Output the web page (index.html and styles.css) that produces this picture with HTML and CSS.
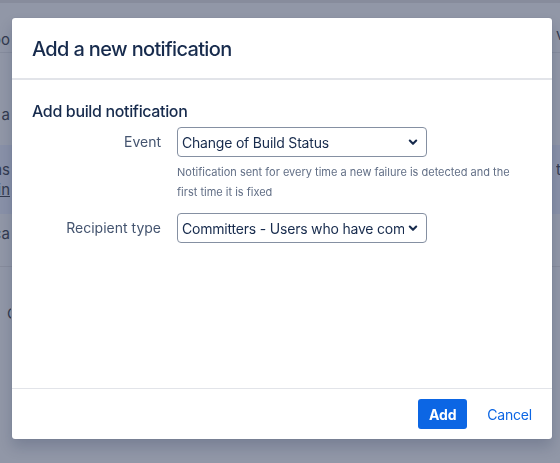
FILE: index.html
```html
<!DOCTYPE html>
<html>
<head>
<meta charset="utf-8">
<link rel="stylesheet" href="styles.css">
</head>
<body>
<div class="page">
  <div class="topstrip"></div>
  <div class="bg-header">
    <div class="bg-left">Repo</div>
    <div class="bg-right">v</div>
  </div>
  <div class="bg-row plain">
    <div class="bg-left">Go to a</div>
  </div>
  <div class="bg-row highlight">
    <div class="bg-left two"><span>Instructions</span><span class="u">Login</span></div>
    <div class="bg-right two"><span>t</span></div>
  </div>
  <div class="bg-row small">
    <div class="bg-left">Notifica</div>
  </div>
  <div class="bg-row last">
    <div class="bg-left">C</div>
  </div>
</div>

<div class="dialog">
  <div class="dialog-header">
    <h2 class="dialog-title">Add a new notification</h2>
  </div>
  <div class="dialog-body">
    <h3 class="section-title">Add build notification</h3>
    <div class="form-row">
      <label class="field-label">Event</label>
      <div class="field">
        <div class="select">
          <span class="select-text">Change of Build Status</span>
          <svg class="chev" width="10" height="7" viewBox="0 0 10 7"><path d="M1.8 1.6 L5 4.8 L8.2 1.6" fill="none" stroke="#172b4d" stroke-width="2.1" stroke-linecap="round" stroke-linejoin="round"/></svg>
        </div>
        <div class="help">Notification sent for every time a new failure is detected and the first time it is fixed</div>
      </div>
    </div>
    <div class="form-row second">
      <label class="field-label">Recipient type</label>
      <div class="field">
        <div class="select">
          <span class="select-text">Committers - Users who have committed to the build</span>
          <svg class="chev" width="10" height="7" viewBox="0 0 10 7"><path d="M1.8 1.6 L5 4.8 L8.2 1.6" fill="none" stroke="#172b4d" stroke-width="2.1" stroke-linecap="round" stroke-linejoin="round"/></svg>
        </div>
      </div>
    </div>
  </div>
  <div class="dialog-footer">
    <button class="btn primary">Add</button>
    <button class="btn link">Cancel</button>
  </div>
</div>
</body>
</html>
```
FILE: styles.css
```css
html, body {
  margin: 0;
  padding: 0;
}
body {
  width: 560px;
  height: 463px;
  overflow: hidden;
  background: #9197a7;
  font-family: Inter, "Noto Sans", "Liberation Sans", sans-serif;
  color: #172b4d;
}
.page {
  display: flex;
  flex-direction: column;
}
.topstrip {
  height: 3px;
  background: #878c9c;
}
.bg-header {
  height: 49px;
  display: flex;
  justify-content: space-between;
  align-items: flex-end;
  border-bottom: 1px solid #868c9d;
}
.bg-left, .bg-right {
  font-size: 15px;
  color: #333b50;
  white-space: nowrap;
  overflow: hidden;
}
.bg-left {
  width: 10px;
  direction: rtl;
  text-align: right;
}
.bg-right {
  width: 4px;
}
.bg-header .bg-left { padding-bottom: 3px; }
.bg-header .bg-right { padding-bottom: 8px; }
.bg-row {
  display: flex;
  justify-content: space-between;
}
.bg-row.plain {
  height: 92px;
  align-items: flex-start;
}
.bg-row.plain .bg-left {
  margin-top: 52px;
  line-height: 20px;
}
.bg-row.highlight {
  height: 69px;
  background: #8991a8;
  align-items: center;
}
.two {
  display: flex;
  flex-direction: column;
  line-height: 20px;
}
.bg-right.two {
  align-self: flex-start;
  margin-top: 15px;
}
.u { text-decoration: underline; }
.bg-row.small {
  height: 52px;
  align-items: flex-start;
  border-bottom: 1px solid #878c9c;
}
.bg-row.small .bg-left {
  margin-top: 10px;
  line-height: 20px;
}
.bg-row.last {
  height: 96px;
  align-items: flex-start;
}
.bg-row.last .bg-left {
  direction: ltr;
  text-align: left;
  width: 4px;
  padding-left: 7px;
  margin-top: 37px;
  line-height: 20px;
}

.dialog {
  position: fixed;
  left: 12px;
  top: 18px;
  width: 540px;
  height: 421px;
  background: #fff;
  border-radius: 3px;
  box-shadow: 0 8px 14px rgba(9, 30, 66, 0.18), 0 0 1px rgba(9, 30, 66, 0.3);
  display: flex;
  flex-direction: column;
}
.dialog-header {
  height: 60px;
  padding: 0 20px;
  display: flex;
  align-items: center;
  border-bottom: 2px solid #e2e4e9;
}
.dialog-title {
  margin: 0;
  font-size: 20px;
  font-weight: 500;
  color: #172b4d;
  letter-spacing: -0.65px;
  padding-top: 1px;
}
.dialog-body {
  flex: 1;
  padding: 19px 20px 0;
}
.section-title {
  margin: 0 0 4px;
  font-size: 16px;
  line-height: 24px;
  font-weight: 500;
  color: #172b4d;
  letter-spacing: -0.35px;
}
.form-row {
  display: grid;
  grid-template-columns: 129px 1fr;
  column-gap: 16px;
}
.form-row.second {
  margin-top: 11px;
}
.field-label {
  text-align: right;
  font-size: 14px;
  line-height: 29px;
  color: #44546f;
}
.select {
  width: 250px;
  height: 30px;
  box-sizing: border-box;
  border: 1px solid #8590a2;
  border-radius: 4px;
  display: flex;
  align-items: center;
  padding: 0 8px 0 4px;
  gap: 4px;
}
.select-text {
  flex: 1;
  white-space: nowrap;
  overflow: hidden;
  font-size: 14px;
  color: #172b4d;
  letter-spacing: -0.2px;
}
.chev {
  flex: none;
}
.help {
  margin-top: 5px;
  font-size: 11px;
  line-height: 20px;
  color: #626f86;
}
.dialog-footer {
  height: 50px;
  border-top: 1px solid #e2e4e9;
  display: flex;
  justify-content: flex-end;
  align-items: center;
  gap: 12px;
  padding: 0 12px 0 20px;
}
.btn {
  font-family: inherit;
  font-size: 14px;
  height: 30px;
  border: none;
  border-radius: 3px;
  cursor: pointer;
  background: none;
}
.btn.primary {
  width: 49px;
  background: #0c66e4;
  color: #fff;
  font-weight: 700;
}
.btn.link {
  padding: 0 8px;
  color: #0c66e4;
  font-weight: 400;
  letter-spacing: -0.2px;
}
```
